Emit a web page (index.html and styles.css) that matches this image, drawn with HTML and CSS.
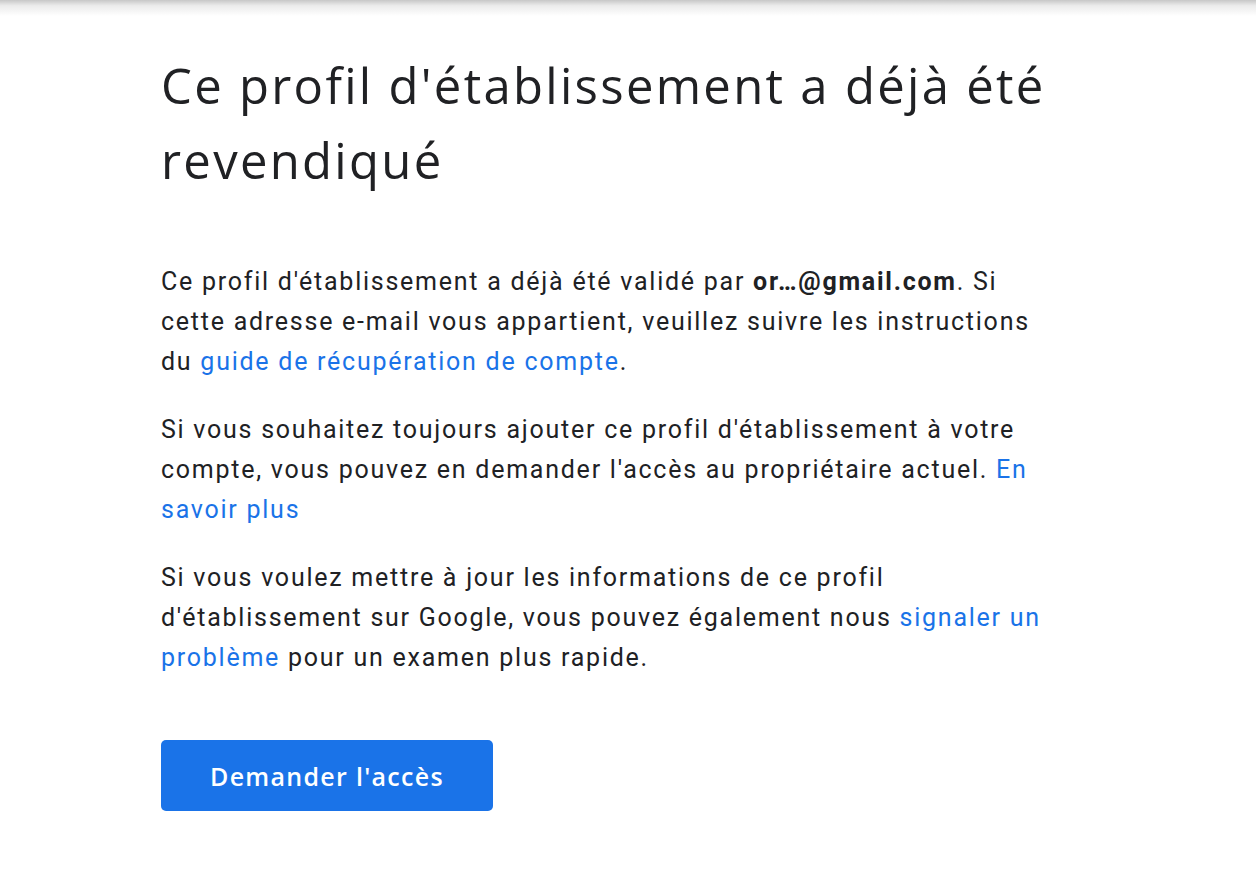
FILE: index.html
```html
<!DOCTYPE html>
<html lang="fr">
<head>
<meta charset="utf-8">
<title>Ce profil d'établissement a déjà été revendiqué</title>
<link rel="stylesheet" href="styles.css">
</head>
<body>
<div class="top-shade"></div>
<main class="page">
  <h1 class="title">Ce profil d'établissement a déjà été revendiqué</h1>
  <p class="text">Ce profil d'établissement a déjà été validé par <b>or…@gmail.com</b>. Si cette adresse e-mail vous appartient, veuillez suivre les instructions du <a class="link" href="#">guide de récupération de compte</a>.</p>
  <p class="text">Si vous souhaitez toujours ajouter ce profil d'établissement à votre compte, vous pouvez en demander l'accès au propriétaire actuel. <a class="link" href="#">En savoir plus</a></p>
  <p class="text">Si vous voulez mettre à jour les informations de ce profil d'établissement sur Google, vous pouvez également nous <a class="link" href="#">signaler un problème</a> pour un examen plus rapide.</p>
  <button class="btn" type="button">Demander l'accès</button>
</main>
</body>
</html>
```
FILE: styles.css
```css
html, body {
  margin: 0;
  padding: 0;
  background: #ffffff;
}
body {
  font-family: Roboto, "Noto Sans", Arial, sans-serif;
  color: #202124;
}
.top-shade {
  height: 16px;
  background: linear-gradient(to bottom, rgba(0,0,0,0.22) 0%, rgba(0,0,0,0.08) 35%, rgba(0,0,0,0) 100%);
}
.page {
  padding: 32px 0 0 161px;
  width: 890px;
}
.title {
  margin: 0 0 64px 0;
  font-family: "Open Sans", "Noto Sans", sans-serif;
  font-weight: 400;
  font-size: 49px;
  line-height: 75px;
  color: #202124;
  letter-spacing: 2.3px;
}
.text {
  margin: 0 0 28px 0;
  font-size: 25px;
  line-height: 40px;
  color: #202124;
  letter-spacing: 1.75px;
}
.text b {
  font-weight: 700;
}
.link {
  color: #1a73e8;
  text-decoration: none;
}
.btn {
  margin-top: 34px;
  width: 332px;
  height: 71px;
  border: none;
  border-radius: 5px;
  background: #1a73e8;
  color: #ffffff;
  font-family: "Open Sans", Roboto, sans-serif;
  font-weight: 600;
  font-size: 25px;
  letter-spacing: 1.3px;
  cursor: pointer;
}
```
